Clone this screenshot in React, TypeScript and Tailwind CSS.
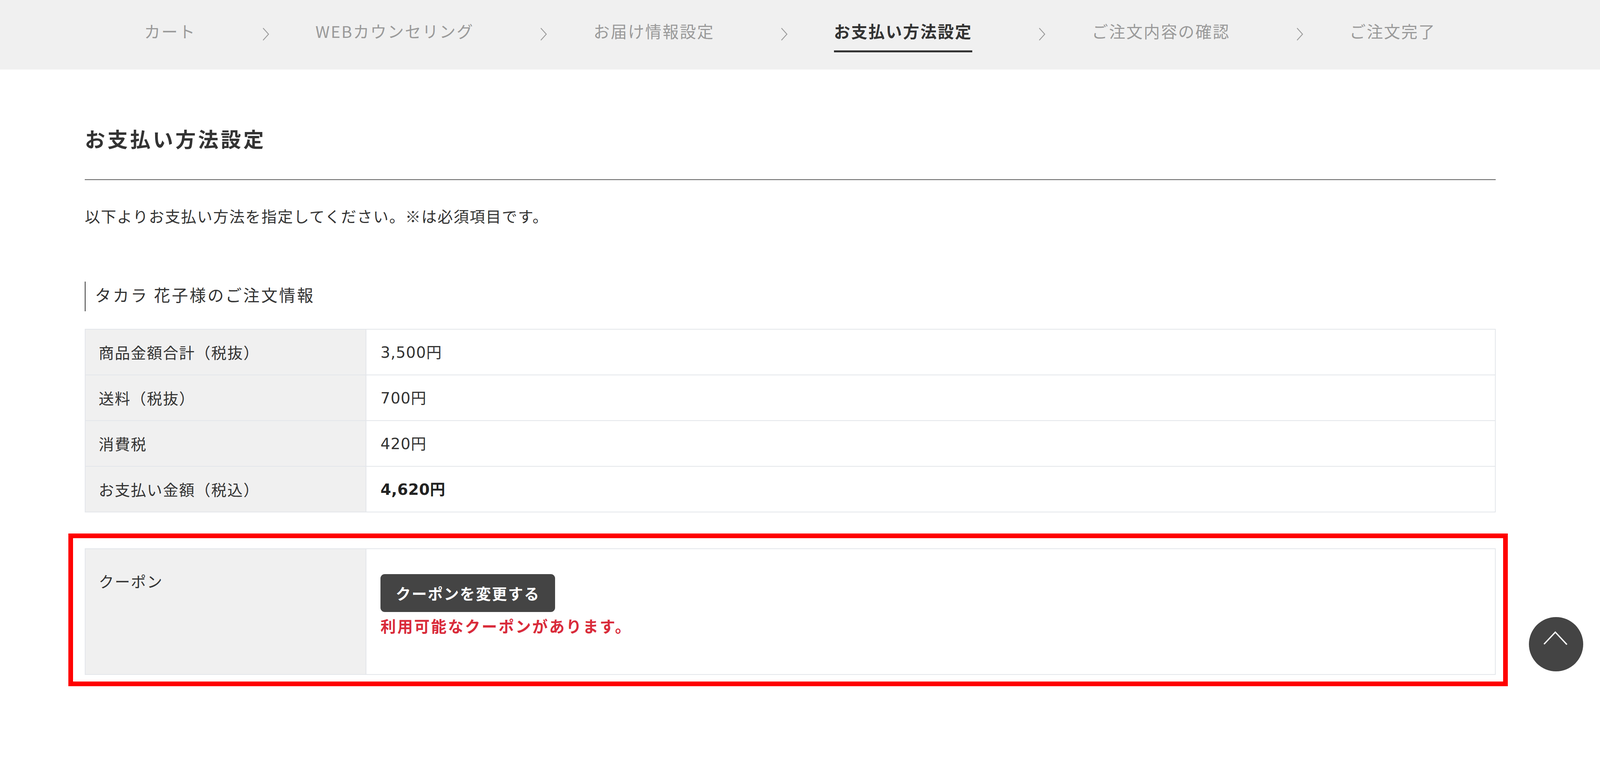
import React from "react";

const steps = [
  { label: "カート", active: false },
  { label: "WEBカウンセリング", active: false },
  { label: "お届け情報設定", active: false },
  { label: "お支払い方法設定", active: true },
  { label: "ご注文内容の確認", active: false },
  { label: "ご注文完了", active: false },
];

const rows = [
  { label: "商品金額合計（税抜）", value: "3,500", bold: false },
  { label: "送料（税抜）", value: "700", bold: false },
  { label: "消費税", value: "420", bold: false },
  { label: "お支払い金額（税込）", value: "4,620", bold: true },
];

function Chevron() {
  return (
    <svg width="17" height="33" viewBox="0 0 17 33" className="mt-[23px] ml-[170px] mr-[119px] shrink-0">
      <polyline points="1.5,1 15.5,16.5 1.5,32" fill="none" stroke="#9a9a9a" strokeWidth="2.2" />
    </svg>
  );
}

export default function App() {
  return (
    <div className="relative h-[1774px] bg-white font-['Noto_Sans_CJK_JP','Noto_Sans',sans-serif] text-[#333]">
      <nav className="flex h-[178.4px] items-start bg-[#f0f0f0] pl-[369px] pt-[48px]">
        {steps.map((s, i) => (
          <React.Fragment key={s.label}>
            <div
              className={
                s.active
                  ? "border-b-[5px] border-[#333] pb-[18px] text-[41.5px] leading-[62.5px] font-bold tracking-[2.8px] text-[#333] whitespace-nowrap"
                  : "text-[41.5px] leading-[62.5px] tracking-[2.7px] text-[#9a9a9a] whitespace-nowrap"
              }
            >
              {s.label}
            </div>
            {i < steps.length - 1 && <Chevron />}
          </React.Fragment>
        ))}
      </nav>

      <main className="ml-[217px] w-[3612px]">
        <div className="mt-[136.6px] border-b-[2.7px] border-[#5f5f5f] pb-[65.6px]">
          <h1 className="text-[52.2px] leading-[78px] font-bold tracking-[5.8px] text-[#333]">お支払い方法設定</h1>
        </div>

        <p className="mt-[62px] text-[39.2px] leading-[58.5px] tracking-[2px] text-[#333]">
          以下よりお支払い方法を指定してください。※は必須項目です。
        </p>

        <h2 className="mt-[140px] border-l-[2.7px] border-[#333] pb-[8px] pl-[24px] text-[41.6px] leading-[67.7px] tracking-[4.2px] text-[#333]">
          タカラ 花子様のご注文情報
        </h2>

        <table className="mt-[45.5px] w-full border-collapse">
          <tbody>
            {rows.map((r) => (
              <tr key={r.label}>
                <th className="h-[117px] w-[719px] border-[2.7px] border-[#e3e6ea] bg-[#f0f0f0] pl-[33.5px] text-left align-middle text-[39.2px] font-normal tracking-[2px] text-[#333]">
                  {r.label}
                </th>
                <td className="h-[117px] border-[2.7px] border-[#e3e6ea] bg-white pl-[36px] align-middle text-[39.2px] text-[#333]">
                  <span
                    className={
                      r.bold
                        ? "font-['DejaVu_Sans',sans-serif] font-bold tracking-[0.5px] text-[#222]"
                        : "font-['DejaVu_Sans',sans-serif] tracking-[1px]"
                    }
                  >
                    {r.value}
                  </span>
                  <span className={r.bold ? "font-bold text-[#222]" : ""}>円</span>
                </td>
              </tr>
            ))}
          </tbody>
        </table>

        <div className="relative mt-[92px]">
          <div className="pointer-events-none absolute -bottom-[29px] -left-[42.2px] -right-[31.4px] -top-[37.8px] border-[12.6px] border-[#ff0000]" />
          <table className="w-full border-collapse">
            <tbody>
              <tr>
                <th className="h-[322px] w-[719px] border-[2.7px] border-[#e3e6ea] bg-[#f0f0f0] pl-[33.5px] pt-[52px] text-left align-top text-[39.2px] leading-[58.5px] font-normal tracking-[2px] text-[#333]">
                  クーポン
                </th>
                <td className="h-[322px] border-[2.7px] border-[#e3e6ea] bg-white pl-[36px] pt-[64px] align-top">
                  <button className="flex h-[96.4px] items-center rounded-[11px] bg-[#444] px-[38.9px] text-[38.6px] font-bold tracking-[2.5px] text-white">
                    クーポンを変更する
                  </button>
                  <p className="mt-[6.4px] text-[39.6px] leading-[58.5px] font-bold tracking-[3.6px] text-[#d92b3a]">
                    利用可能なクーポンがあります。
                  </p>
                </td>
              </tr>
            </tbody>
          </table>
        </div>
      </main>

      <button className="absolute left-[3913.5px] top-[1580px] flex h-[139px] w-[139px] items-center justify-center rounded-full bg-[#444]">
        <svg width="139" height="139" viewBox="0 0 139 139">
          <polyline points="38.7,69.4 67.6,38.7 97.3,70.3" fill="none" stroke="#fff" strokeWidth="3.4" />
        </svg>
      </button>
    </div>
  );
}
